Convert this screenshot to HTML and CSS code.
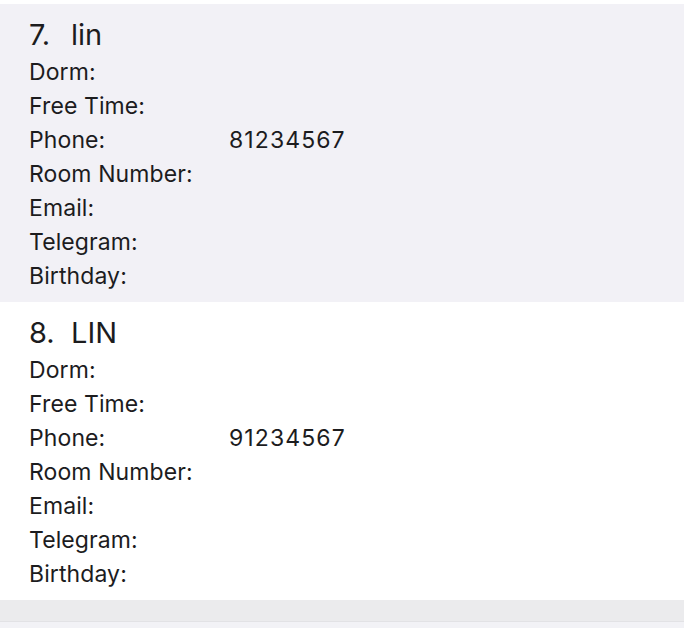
FILE: index.html
```html
<!DOCTYPE html>
<html lang="en">
<head>
<meta charset="utf-8">
<title>Contacts</title>
<link rel="stylesheet" href="styles.css">
</head>
<body>
<div class="list">
  <div class="card card-alt">
    <div class="title"><span class="num">7.</span><span class="name">lin</span></div>
    <div class="row"><span class="label">Dorm:</span><span class="value"></span></div>
    <div class="row"><span class="label">Free Time:</span><span class="value"></span></div>
    <div class="row"><span class="label">Phone:</span><span class="value">81234567</span></div>
    <div class="row"><span class="label">Room Number:</span><span class="value"></span></div>
    <div class="row"><span class="label">Email:</span><span class="value"></span></div>
    <div class="row"><span class="label">Telegram:</span><span class="value"></span></div>
    <div class="row"><span class="label">Birthday:</span><span class="value"></span></div>
  </div>
  <div class="card">
    <div class="title"><span class="num">8.</span><span class="name">LIN</span></div>
    <div class="row"><span class="label">Dorm:</span><span class="value"></span></div>
    <div class="row"><span class="label">Free Time:</span><span class="value"></span></div>
    <div class="row"><span class="label">Phone:</span><span class="value">91234567</span></div>
    <div class="row"><span class="label">Room Number:</span><span class="value"></span></div>
    <div class="row"><span class="label">Email:</span><span class="value"></span></div>
    <div class="row"><span class="label">Telegram:</span><span class="value"></span></div>
    <div class="row"><span class="label">Birthday:</span><span class="value"></span></div>
  </div>
  <div class="footer-band"></div>
  <div class="footer-line"></div>
  <div class="footer-rest"></div>
</div>
</body>
</html>
```
FILE: styles.css
```css
html, body {
  margin: 0;
  padding: 0;
  background: #ffffff;
}
body {
  font-family: Inter, "Noto Sans", sans-serif;
  color: #1c1c1e;
}
.list {
  padding-top: 4px;
  display: flex;
  flex-direction: column;
}
.card {
  padding: 10px 0 9px 29px;
  background: #ffffff;
}
.card-alt {
  background: #f2f1f6;
}
.title {
  display: flex;
  font-size: 29px;
  line-height: 41px;
}
.num {
  width: 42px;
}
.row {
  display: grid;
  grid-template-columns: 200px 1fr;
  font-size: 23px;
  line-height: 34px;
  letter-spacing: 0.1px;
}
.value {
  letter-spacing: 1.1px;
}
.footer-band {
  height: 21px;
  background: #ebebed;
}
.footer-line {
  height: 1px;
  background: #e2e2e5;
}
.footer-rest {
  height: 6px;
  background: #f2f2f6;
}
```
